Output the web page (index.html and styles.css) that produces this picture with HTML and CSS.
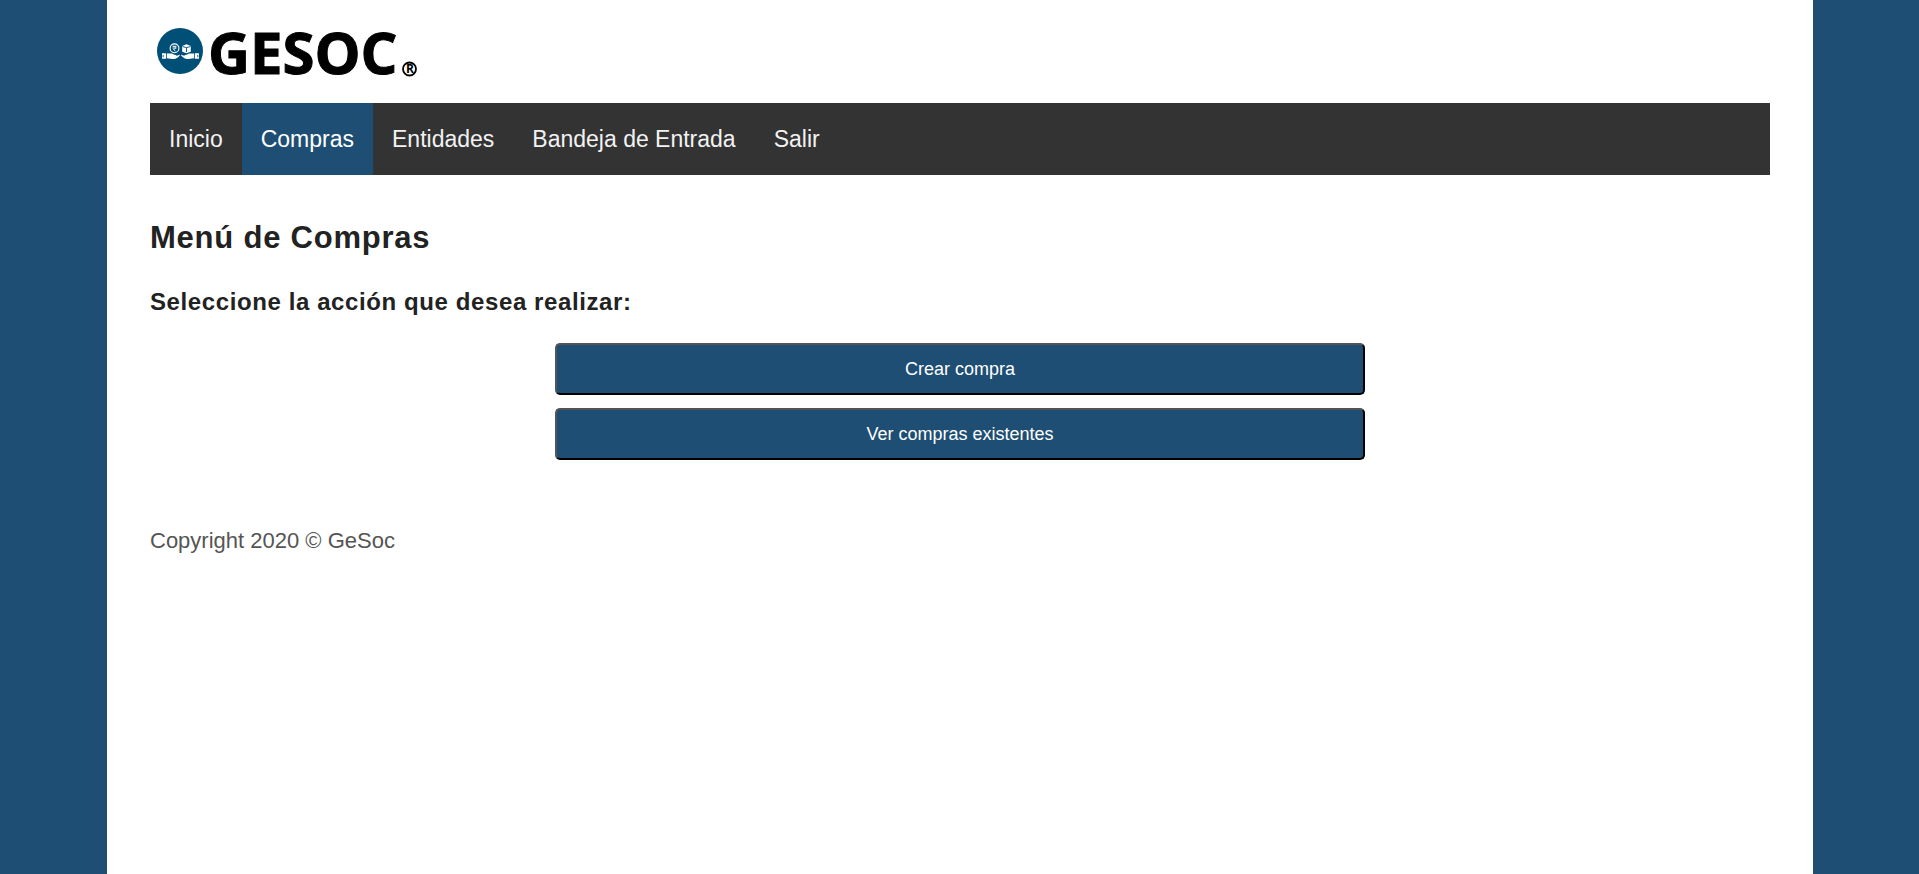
FILE: index.html
```html
<!DOCTYPE html>
<html lang="es">
<head>
<meta charset="utf-8">
<meta name="viewport" content="width=device-width, initial-scale=1">
<title>GeSoc - Compras</title>
<link rel="stylesheet" href="styles.css">
</head>
<body>
<div class="page">
  <header class="header">
    <svg class="logo" width="280" height="86" viewBox="0 -12 280 86" role="img" aria-label="GESOC">
      <circle cx="30" cy="31" r="23" fill="#004f76"/>
      <g fill="none" stroke="#fff">
        <circle cx="24.500" cy="28.300" r="4.400" stroke-width="1.100"/>
        <path d="M22.500 26.300h4M22.500 28h4M23.500 26.300c3 0 2.500 3 0 3l2 2" stroke-width=".9"/>
      </g>
      <path fill="#fff" d="M32.200 26l4.300-1.800 4.300 1.800v5.800l-4.300 1.400-4.300-1.400z"/>
      <path d="M32.500 26.500l4 1.200 4-1.200M36.500 27.700v4.300" fill="none" stroke="#004f76" stroke-width=".9"/>
      <g id="hand">
        <path fill="#fff" d="M12 33.300h4.200v5.400H12zM17 33.400h4.200c1.800 0 2.500 1.500 4.500 1.500 1.200 0 1.300 1.100 0 1.300l3.200-1.300c.8-.2 1.200.4.700.9-1.600 1.600-3.600 3.300-5.600 3.300-2.500 0-4.500-.9-7-.9z"/>
        <path d="M13.200 35v2.200" stroke="#004f76" stroke-width=".9"/>
      </g>
      <use href="#hand" transform="matrix(-1 0 0 1 61 0)"/>
      <text class="logo-name" x="58" y="54">GESOC</text>
      <circle cx="259.500" cy="49" r="6.500" fill="none" stroke="#000" stroke-width="1.800"/>
      <text class="logo-mark" x="260" y="53" text-anchor="middle">R</text>
    </svg>
  </header>
  <nav class="nav">
    <a class="nav-link" href="#inicio">Inicio</a>
    <a class="nav-link active" href="#compras" aria-current="page">Compras</a>
    <a class="nav-link" href="#entidades">Entidades</a>
    <a class="nav-link" href="#bandeja">Bandeja de Entrada</a>
    <a class="nav-link" href="#salir">Salir</a>
  </nav>
  <main class="main">
    <h2 class="title">Menú de Compras</h2>
    <h3 class="subtitle">Seleccione la acción que desea realizar:</h3>
    <div class="actions">
      <button class="action" type="button">Crear compra</button>
      <button class="action" type="button">Ver compras existentes</button>
    </div>
  </main>
  <footer class="footer">Copyright 2020 © GeSoc</footer>
</div>
</body>
</html>
```
FILE: styles.css
```css
* {
  box-sizing: border-box;
}

body {
  margin: 0;
  padding: 0 106px 0 107px;
  background: #1e4e73;
  color: #222;
  font-family: Arial, "Liberation Sans", sans-serif;
}

.page {
  min-height: 100vh;
  padding: 8px 43px;
  background: #fff;
}

.header {
  padding-bottom: 9px;
}

.logo {
  display: block;
}

.logo-name {
  font: 700 58px "Open Sans", sans-serif;
  stroke: #000;
  stroke-width: 1px;
}

.logo-mark {
  font: 700 12px "Open Sans", sans-serif;
}

.nav {
  display: flex;
  background: #333;
}

.nav-link {
  padding: 0 19px;
  color: #f2f2f2;
  font-size: 23px;
  line-height: 72px;
  text-decoration: none;
}

.nav-link.active {
  background: #1e4e73;
  color: #fff;
}

.main {
  padding-top: 43px;
}

.title,
.subtitle {
  margin: 0;
  letter-spacing: 0.025em;
}

.title {
  font-size: 31px;
  line-height: 40px;
}

.subtitle {
  margin-top: 28px;
  font-size: 24px;
  line-height: 32px;
}

.actions {
  display: grid;
  gap: 13px;
  width: 50%;
  margin: 25px auto 0;
}

.action {
  height: 52px;
  border: 2px outset #000;
  border-radius: 5px;
  background: #1e4e73;
  color: #fff;
  font-family: inherit;
  font-size: 18px;
}

.footer {
  margin-top: 66px;
  color: #555;
  font-size: 22px;
  line-height: 30px;
}
```
